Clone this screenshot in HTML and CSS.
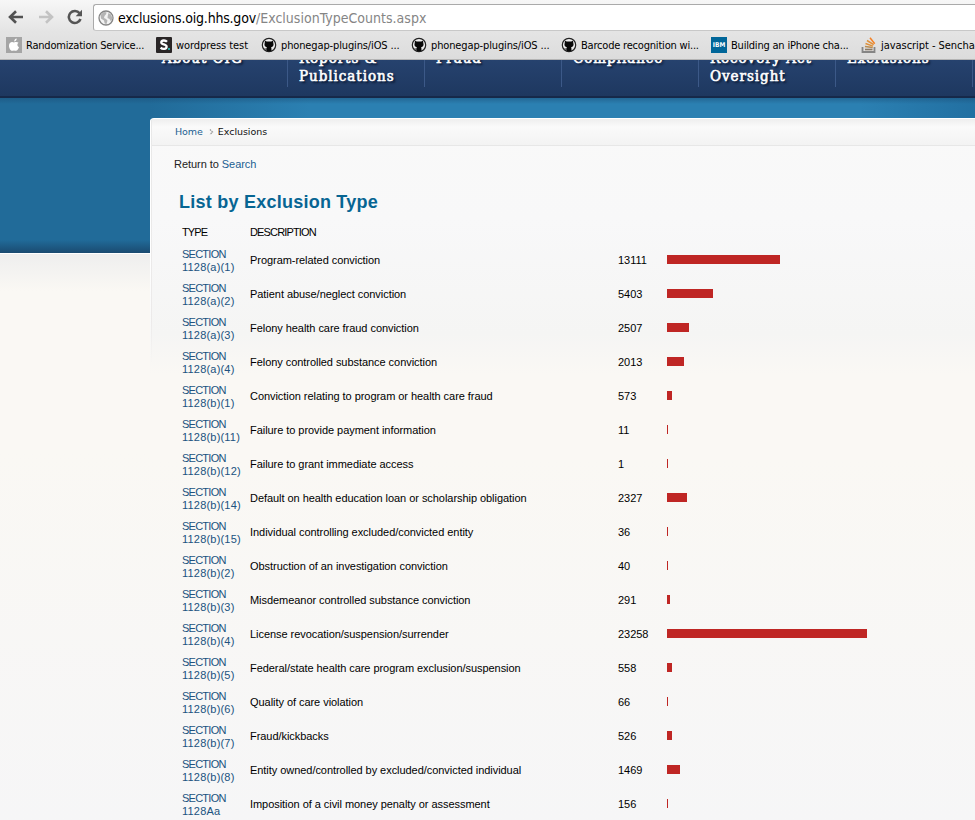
FILE: index.html
```
<!DOCTYPE html>
<html lang="en">
<head>
<meta charset="utf-8">
<title>Exclusions</title>
<link rel="stylesheet" href="styles.css">
</head>
<body>
<svg class="defs" width="0" height="0" aria-hidden="true">
  <symbol id="cat" viewBox="0 0 16 16">
    <circle cx="8" cy="8" r="6.7" fill="#eee" stroke="#222" stroke-width="1.2"/>
    <path d="M4 3.8l1.8.8h4.4l1.8-.8.3 2.2c.8 2.3-.3 4-2.3 4.4.5.6.5 1 .5 3.8h-5v-1.7c-1.3.2-1.6-.6-2.3-1.3.8-.2 1.2.7 2.3.4 0-.5.1-.8.5-1.2-2-.4-3.100-2.100-2.300-4.400z" fill="#080808"/>
  </symbol>
</svg>
<header class="browser">
  <div class="toolbar">
    <svg class="nav-icon" width="16" height="14" viewBox="0 0 16 14"><path d="M8 1.200L2 7l6 5.800M2.500 7H15" fill="none" stroke="#525252" stroke-width="2.600"/></svg>
    <svg class="nav-icon fwd" width="16" height="14" viewBox="0 0 16 14"><path d="M8 1.200L14 7l-6 5.800M13.500 7H1" fill="none" stroke="#c3c3c3" stroke-width="2.600"/></svg>
    <svg class="nav-icon reload" width="16" height="16" viewBox="0 0 16 16"><path d="M12.600 4.300A6 6 0 1 0 13.500 10" fill="none" stroke="#555" stroke-width="2.600"/><path d="M15 .8v6.400H8.700z" fill="#555"/></svg>
    <div class="address">
      <svg width="16" height="16" viewBox="0 0 16 16"><circle cx="8" cy="8" r="7" fill="#f3f3f3" stroke="#858585" stroke-width="1.300"/><path d="M2.500 5l3-3 3 .3-.3 1.700L6.500 6 6 8l2 1 1.500 1.500L8.500 14l-1.800-.5-.7-3L3 8.500zM10.500 3l2.500 1.500 1.500 4-1.500 3-1.500-2.500L9.500 8l.3-2.500z" fill="#b4b4b4"/></svg>
      <span class="url"><b>exclusions.oig.hhs.gov</b><i>/ExclusionTypeCounts.aspx</i></span>
    </div>
  </div>
  <div class="bookmarks">
    <div class="bm b1"><svg width="16" height="16" viewBox="0 0 16 16"><rect width="16" height="16" fill="#a5a5a5"/><path d="M8.200 4.500C8.100 3 9.200 1.600 10.700 1.500c.1 1.600-1.100 2.900-2.500 3zM12.500 5.700c-1.700 1.100-1.500 3.700.5 4.500-.6 1.900-1.900 3.600-3 3.600-.8 0-1.200-.4-2-.4s-1.300.4-2 .4C4.400 13.800 3 11 3 8.700c0-3.600 2.900-4.500 5-3.300 1.700-.8 3.600-.6 4.500.3z" fill="#fff"/></svg><span>Randomization Service...</span></div>
    <div class="bm b2"><svg width="16" height="16" viewBox="0 0 16 16"><rect width="16" height="16" rx="1" fill="#292526"/><path d="M11 4.700C9.500 3 5.300 3 5.300 5.400c0 2.500 5.300 1.500 5.300 4.300 0 2.600-4.200 2.700-6 .9" fill="none" stroke="#fff" stroke-width="2.300"/><path d="M12 11h2v2h-2z" fill="#29a7a0"/></svg><span>wordpress test</span></div>
    <div class="bm b3"><svg width="16" height="16"><use href="#cat"/></svg><span>phonegap-plugins/iOS ...</span></div>
    <div class="bm b3"><svg width="16" height="16"><use href="#cat"/></svg><span>phonegap-plugins/iOS ...</span></div>
    <div class="bm b4"><svg width="16" height="16"><use href="#cat"/></svg><span>Barcode recognition wi...</span></div>
    <div class="bm b5"><div class="ibm">IBM</div><span>Building an iPhone cha...</span></div>
    <div class="bm b6"><svg width="16" height="16" viewBox="0 0 16 16"><path d="M1.500 10v5h12v-5" fill="none" stroke="#858585" stroke-width="1.800"/><path d="M4 12.500h7.500" stroke="#8c7a64" stroke-width="1.600"/><path d="M4 9.500l7.700 1" stroke="#b98b50" stroke-width="1.600"/><path d="M4.500 6.500l7.500 2.600M6 3.500l6.700 4.200" stroke="#e09038" stroke-width="1.500"/><path d="M9 .7l4.700 6" stroke="#f48024" stroke-width="1.500"/></svg><span>javascript - Sencha-</span></div>
  </div>
</header>
<div class="site">
  <nav class="menu">
    <a class="m0"><span>About OIG</span></a>
    <a><span>Reports &amp;<br>Publications</span></a>
    <a><span>Fraud</span></a>
    <a><span>Compliance</span></a>
    <a><span>Recovery Act<br>Oversight</span></a>
    <a><span>Exclusions</span></a>
  </nav>
  <div class="stage">
    <main class="panel">
      <div class="crumbs"><a class="home">Home</a><svg width="5" height="6" viewBox="0 0 5 6"><path d="M1 .5L3.500 3 1 5.500" fill="none" stroke="#999" stroke-width="1.300" stroke-dasharray="1.600 .7"/></svg><span>Exclusions</span></div>
      <p class="return">Return to <a>Search</a></p>
      <h1>List by Exclusion Type</h1>
      <div class="table">
        <div class="row head"><span>TYPE</span><span>DESCRIPTION</span></div>
        <div class="row"><a><b>SECTION</b><br>1128(a)(1)</a><span>Program-related conviction</span><span>13111</span><i class="bar" style="width:113px"></i></div>
        <div class="row"><a><b>SECTION</b><br>1128(a)(2)</a><span>Patient abuse/neglect conviction</span><span>5403</span><i class="bar" style="width:46px"></i></div>
        <div class="row"><a><b>SECTION</b><br>1128(a)(3)</a><span>Felony health care fraud conviction</span><span>2507</span><i class="bar" style="width:22px"></i></div>
        <div class="row"><a><b>SECTION</b><br>1128(a)(4)</a><span>Felony controlled substance conviction</span><span>2013</span><i class="bar" style="width:17px"></i></div>
        <div class="row"><a><b>SECTION</b><br>1128(b)(1)</a><span>Conviction relating to program or health care fraud</span><span>573</span><i class="bar" style="width:5px"></i></div>
        <div class="row"><a><b>SECTION</b><br>1128(b)(11)</a><span>Failure to provide payment information</span><span>11</span><i class="bar" style="width:1px"></i></div>
        <div class="row"><a><b>SECTION</b><br>1128(b)(12)</a><span>Failure to grant immediate access</span><span>1</span><i class="bar" style="width:1px"></i></div>
        <div class="row"><a><b>SECTION</b><br>1128(b)(14)</a><span>Default on health education loan or scholarship obligation</span><span>2327</span><i class="bar" style="width:20px"></i></div>
        <div class="row"><a><b>SECTION</b><br>1128(b)(15)</a><span>Individual controlling excluded/convicted entity</span><span>36</span><i class="bar" style="width:1px"></i></div>
        <div class="row"><a><b>SECTION</b><br>1128(b)(2)</a><span>Obstruction of an investigation conviction</span><span>40</span><i class="bar" style="width:1px"></i></div>
        <div class="row"><a><b>SECTION</b><br>1128(b)(3)</a><span>Misdemeanor controlled substance conviction</span><span>291</span><i class="bar" style="width:3px"></i></div>
        <div class="row"><a><b>SECTION</b><br>1128(b)(4)</a><span>License revocation/suspension/surrender</span><span>23258</span><i class="bar" style="width:200px"></i></div>
        <div class="row"><a><b>SECTION</b><br>1128(b)(5)</a><span>Federal/state health care program exclusion/suspension</span><span>558</span><i class="bar" style="width:5px"></i></div>
        <div class="row"><a><b>SECTION</b><br>1128(b)(6)</a><span>Quality of care violation</span><span>66</span><i class="bar" style="width:1px"></i></div>
        <div class="row"><a><b>SECTION</b><br>1128(b)(7)</a><span>Fraud/kickbacks</span><span>526</span><i class="bar" style="width:5px"></i></div>
        <div class="row"><a><b>SECTION</b><br>1128(b)(8)</a><span>Entity owned/controlled by excluded/convicted individual</span><span>1469</span><i class="bar" style="width:13px"></i></div>
        <div class="row"><a><b>SECTION</b><br>1128Aa</a><span>Imposition of a civil money penalty or assessment</span><span>156</span><i class="bar" style="width:1px"></i></div>
      </div>
    </main>
  </div>
</div>
</body>
</html>
```
FILE: styles.css
```
* { box-sizing: border-box; }
body {
  margin: 0;
  height: 820px;
  overflow: hidden;
  display: flex;
  flex-direction: column;
  font: 11px/13px "Liberation Sans", Arial, sans-serif;
  color: #111;
}
.defs { display: none; }
svg { display: block; flex: none; }

.browser {
  flex: none;
  height: 60px;
  overflow: hidden;
  background: linear-gradient(#f7f7f7, #e4e4e4 32px, #dcdcdc);
  border-bottom: 1px solid #b4b4b4;
  font-family: "DejaVu Sans Condensed", "DejaVu Sans", sans-serif;
  color: #000;
}
.toolbar { display: flex; height: 31px; padding: 4px 0 0 8px; }
.nav-icon { margin-top: 6px; }
.fwd { margin-left: 14px; }
.reload { margin: 5px 0 0 13px; }
.address {
  flex: 1;
  height: 27px;
  margin-left: 10px;
  padding-left: 4px;
  display: flex;
  align-items: center;
  gap: 4px;
  background: #fff;
  border: 1px solid #aaa;
  border-right: 0;
  border-bottom-color: #c8c8c8;
  border-radius: 3px 0 0 3px;
}
.url { font: 14px/20px "DejaVu Sans Condensed", sans-serif; letter-spacing: 0.02px; white-space: nowrap; }
.url b { font-weight: 400; letter-spacing: -0.2px; }
.url i { font-style: normal; color: #858585; }
.bookmarks { display: flex; padding: 6px 0 0 6px; }
.bm { display: flex; flex: none; align-items: center; gap: 4px; width: 150px; height: 16px; letter-spacing: -0.2px; white-space: nowrap; }
.b2 { width: 105px; letter-spacing: -0.07px; }
.b3 { letter-spacing: -0.13px; }
.b6 { width: auto; flex: 1; min-width: 0; overflow: hidden; letter-spacing: -0.05px; }
.ibm {
  width: 16px;
  height: 16px;
  background: #006699;
  color: #fff;
  font: bold 6.5px/16px "DejaVu Sans Condensed", sans-serif;
  letter-spacing: 0;
  text-align: center;
}

.site {
  flex: 1;
  min-height: 0;
  overflow: hidden;
  background: linear-gradient(#fff 1px, #eeeeee 1px, #faf8f4 38px, #faf8f4 200px, #f6f6f7 567px) 0 193px no-repeat #faf8f4;
}
.menu {
  display: flex;
  height: 38px;
  padding-left: 151px;
  background: linear-gradient(#26426e, #1e3860);
  border-bottom: 2px solid #16294a;
}
.menu a {
  flex: none;
  width: 137px;
  height: 27px;
  padding-left: 11px;
  border-right: 1px solid #3c5988;
  overflow: hidden;
  display: flex;
  align-items: flex-start;
  color: #fff;
  font: 15px/18px "DejaVu Serif Condensed", "DejaVu Serif", serif;
  -webkit-text-stroke: 0.6px #fff;
  letter-spacing: 0.95px;
  text-shadow: 2px 2px 2px #07142b;
  white-space: nowrap;
}
.menu span { margin-top: -11px; }
.stage {
  height: 722px;
  padding: 20px 0 0 151px;
  background:
    linear-gradient(#1c4f7880, #2579a700 6px) 0 0 / 100% 10px no-repeat,
    linear-gradient(transparent 142px, #1a4a70 155px) 0 0 / 151px 155px no-repeat,
    linear-gradient(90deg, #216b99, #216b99 150px, #2b80b2 310px, #2b80b2 860px, #2270a2) 0 0 / 100% 155px no-repeat;
}
.panel {
  height: 702px;
  padding: 0 0 0 24px;
  border-radius: 4px 0 0 0;
  border-top: 1px solid #fff;
  margin-left: -1px;
  background:
    linear-gradient(#fff, #fff 135px, #faf8f400 245px) 0 0 / 1px 245px no-repeat,
    linear-gradient(#e8e8e8, #eceaea 200px, #faf8f400 245px) 1px 0 / 1px 245px no-repeat,
    linear-gradient(#f9f9f9, #f8f8f9 100px, #f5f5f4 215px, #faf8f4 255px, #faf8f4 340px, #f6f6f7 702px);
}
.crumbs {
  display: flex;
  align-items: center;
  height: 27px;
  margin-left: -22px;
  padding-left: 23px;
  padding-bottom: 1px;
  border-bottom: 1px solid #e7e7e7;
  background: linear-gradient(#eeeeee, #fafafa 8px, #f3f3f3);
  font: 9.5px/13px "DejaVu Sans", sans-serif;
  letter-spacing: -0.05px;
}
.crumbs svg { margin: 0 4px 0 6px; }
a { color: #1c5f92; }
.return { margin: 12px 0 0; letter-spacing: -0.05px; color: #222; }
h1 { margin: 20px 0 0 5px; font: bold 18px/22px "Liberation Sans", Arial, sans-serif; letter-spacing: 0.24px; color: #076593; }
.table { margin: 11px 0 0 8px; color: #000; }
.row {
  display: grid;
  grid-template-columns: 68px 368px 49px 250px;
  align-items: center;
  height: 34px;
  white-space: nowrap;
  letter-spacing: -0.05px;
}
.row span { padding-bottom: 2px; }
.row a { color: #20527f; letter-spacing: 0.2px; }
.row a b { font-weight: 400; letter-spacing: -0.75px; }
.head { height: 20px; letter-spacing: -0.85px; }
.head span { padding-bottom: 4px; }
.bar { height: 9px; margin-bottom: 3px; background: #bf2624; }
```
